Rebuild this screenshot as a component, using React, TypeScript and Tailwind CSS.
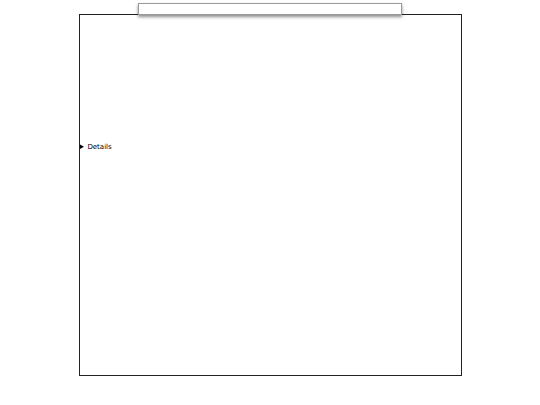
export default function App() {
  return (
    <div className="relative h-[405px] w-[540px] bg-white font-['DejaVu_Sans',sans-serif]">
      <div className="absolute left-[138px] top-[3px] z-10 h-[12px] w-[264px] border border-[#9a9a9a] bg-white shadow-[0_2px_3px_rgba(0,0,0,0.45)]" />
      <div className="ml-[79px] pt-[14px]">
        <div className="h-[362px] w-[383px] border-[1.5px] border-[#222] bg-white pt-[127px]">
          <details>
            <summary className="cursor-pointer text-[7px] leading-[10px] text-black">Details</summary>
          </details>
        </div>
      </div>
    </div>
  );
}
